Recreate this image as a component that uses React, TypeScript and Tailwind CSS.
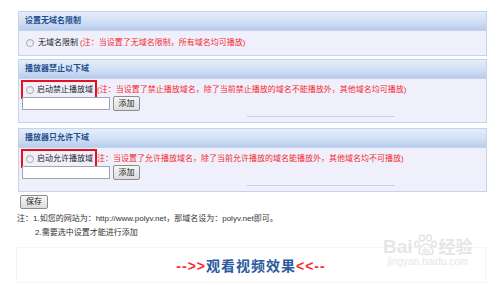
import React from "react";

const font = "font-['Liberation_Sans','Noto_Sans_CJK_SC',sans-serif]";

function Radio() {
  return (
    <span className="inline-block w-[8px] h-[8px] rounded-full border border-[#a9a9a9] bg-gradient-to-b from-[#e6e6e6] to-[#fafafa] shrink-0" />
  );
}

function PanelHeader({ title }: { title: string }) {
  return (
    <div className="h-[19px] flex items-center pl-[6px] border-b border-[#c3d3ec] bg-gradient-to-b from-[#e4edfa] via-[#d3e1f5] to-[#b7cdee]">
      <span className="text-[8px] font-bold text-[#1f4f8e] leading-none">{title}</span>
    </div>
  );
}

function AddRow() {
  return (
    <div className="flex items-center -mt-[3px]">
      <div className="w-[88px] h-[13px] border border-[#9da6b2] bg-white" />
      <button className="ml-[3px] w-[27px] h-[15px] border border-[#8c8c8c] rounded-[2px] bg-gradient-to-b from-[#f7f7f7] to-[#dcdcdc] text-[8px] leading-none text-[#222] flex items-center justify-center">
        添加
      </button>
    </div>
  );
}

function DomainPanel({ title, label, note }: { title: string; label: string; note: string }) {
  return (
    <div className="border border-[#c3d3ec] bg-[#f0f0fd]">
      <PanelHeader title={title} />
      <div className="px-[3px] pt-[1px] h-[43px]">
        <div className="flex items-center">
          <div className="-ml-px w-[76px] h-[19px] border-2 border-[#e8101a] flex items-center pl-[3px] shrink-0">
            <Radio />
            <span className="ml-[3px] text-[8px] leading-none text-[#222]">{label}</span>
          </div>
          <span className="text-[8px] leading-none text-[#f52a2a] whitespace-nowrap">{note}</span>
        </div>
        <AddRow />
        <div className="mt-[5px] ml-[225px] w-[148px] h-px bg-[#c9cff6]" />
      </div>
    </div>
  );
}

export default function App() {
  return (
    <div className={`relative w-[500px] h-[285px] overflow-hidden bg-white pt-[11px] ${font}`}>
      <div className="mx-[18px] w-[469px]">
        {/* no-domain panel */}
        <div className="border border-[#c3d3ec] bg-[#f0f0fd]">
          <PanelHeader title="设置无域名限制" />
          <div className="h-[24px] flex items-center pl-[7px]">
            <Radio />
            <span className="ml-[4px] text-[8px] leading-none text-[#222]">无域名限制</span>
            <span className="ml-[2px] text-[8px] leading-none text-[#f52a2a] whitespace-nowrap">
              (注：当设置了无域名限制，所有域名均可播放)
            </span>
          </div>
        </div>

        <div className="mt-[3px]">
          <DomainPanel
            title="播放器禁止以下域"
            label="启动禁止播放域"
            note="(注：当设置了禁止播放域名，除了当前禁止播放的域名不能播放外，其他域名均可播放)"
          />
        </div>

        <div className="mt-[5px]">
          <DomainPanel
            title="播放器只允许下域"
            label="启动允许播放域"
            note="注：当设置了允许播放域名，除了当前允许播放的域名能播放外，其他域名均不可播放)"
          />
        </div>
      </div>

      <button className="ml-[20px] mt-[3px] w-[28px] h-[14px] border border-[#8c8c8c] rounded-[2px] bg-gradient-to-b from-[#f7f7f7] to-[#dcdcdc] text-[8px] leading-none text-[#222] flex items-center justify-center">
        保存
      </button>

      <div className="ml-[17px] mt-[3px] text-[8px] leading-[14px] text-[#333]">
        <p className="whitespace-nowrap">注：1.如您的网站为：http://www.polyv.net，那域名设为：polyv.net即可。</p>
        <p className="pl-[18px] whitespace-nowrap">2.需要选中设置才能进行添加</p>
      </div>

      <div className="ml-[16px] mt-[7px] w-[470px] h-[36px] border border-[#f5f5f5] flex items-center justify-center pt-[1px]">
        <span className="text-[14px] font-bold leading-none tracking-[1px] whitespace-nowrap">
          <span className="text-[#ff2a2a]">--&gt;&gt;</span>
          <span className="text-[#2b5a9e]">观看视频效果</span>
          <span className="text-[#ff2a2a]">&lt;&lt;--</span>
        </span>
      </div>

      {/* baidu watermark */}
      <div className="absolute left-[383px] top-[234px] flex flex-col items-center text-[#e6e6e6] pointer-events-none">
        <div className="flex items-end leading-none">
          <span className="text-[19px] font-bold font-['Liberation_Sans',sans-serif]">Bai</span>
          <svg width="24" height="22" viewBox="0 0 24 22" className="mx-[1px]">
            <g fill="none" stroke="#e4e4e4" strokeWidth="1.5">
              <ellipse cx="8" cy="4" rx="2.5" ry="3" />
              <ellipse cx="15" cy="4" rx="2.5" ry="3" />
              <ellipse cx="3" cy="10" rx="2.2" ry="2.8" />
              <ellipse cx="20" cy="10" rx="2.2" ry="2.8" />
              <path d="M5 19 C5 13 9 10 12 10 C15 10 19 13 19 19 C19 21 5 21 5 19 Z" />
            </g>
            <text x="12" y="19" fontSize="7" textAnchor="middle" fill="#e4e4e4" fontWeight="bold" fontFamily="Liberation Sans">du</text>
          </svg>
          <span className="text-[17px] font-bold">经验</span>
        </div>
        <span className="text-[10px] leading-none mt-[1px] font-['Liberation_Sans',sans-serif]">jingyan.baidu.com</span>
      </div>
    </div>
  );
}
